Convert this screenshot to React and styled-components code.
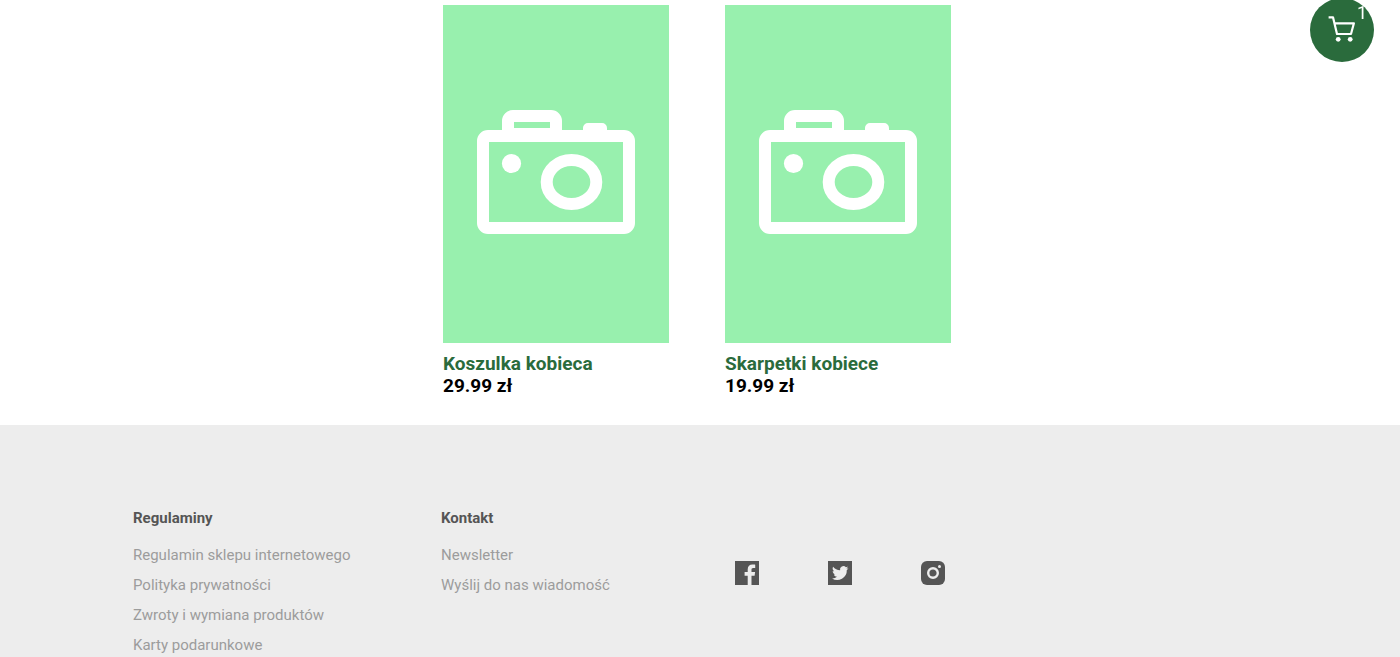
import React from 'react';
import styled, { createGlobalStyle } from 'styled-components';

const GlobalStyle = createGlobalStyle`
  *, *::before, *::after { box-sizing: border-box; }
  body {
    margin: 0;
    background: #fff;
    color: #000;
    font-family: Roboto, "Liberation Sans", sans-serif;
  }
  a { color: inherit; text-decoration: none; }
`;

const Page = styled.div`
  display: flex;
  flex-direction: column;
  min-height: 100vh;
`;

const Products = styled.main`
  display: flex;
  justify-content: center;
  gap: 56px;
  padding: 5px 24px 28px 18px;
`;

const Card = styled.a`
  display: block;
  width: 226px;
`;

const Photo = styled.svg`
  display: block;
  width: 100%;
  height: auto;
  background: #98f0ae;
`;

const Name = styled.h2`
  margin: 10px 0 0;
  color: #2a6b3c;
  font-size: 19px;
  line-height: 22px;
  font-weight: 700;
`;

const Price = styled.p`
  margin: 0;
  font-size: 19px;
  line-height: 22px;
  font-weight: 700;
`;

const CartButton = styled.button`
  position: fixed;
  top: -2px;
  right: 26px;
  width: 64px;
  height: 64px;
  padding: 0;
  border: 0;
  border-radius: 50%;
  background: #2a6b3c;
  color: #fff;
  font-family: inherit;
  cursor: pointer;

  svg { display: block; }
`;

const CartCount = styled.span`
  position: absolute;
  top: 4px;
  right: 7px;
  font-size: 18px;
  line-height: 22px;
`;

const Footer = styled.footer`
  flex: 1;
  display: grid;
  grid-template-columns: 308px 294px 210px;
  align-items: start;
  padding: 82px 9.5% 0;
  background: #ededed;
`;

const FooterTitle = styled.h3`
  margin: 0 0 11px;
  color: #555;
  font-size: 15px;
  line-height: 22px;
  font-weight: 700;
`;

const LinkList = styled.ul`
  margin: 0;
  padding: 0;
  list-style: none;
  color: #9c9c9c;
  font-size: 15px;
  line-height: 30px;
`;

const Social = styled.nav`
  display: flex;
  justify-content: space-between;
  padding-top: 54px;
  color: #555;

  svg { display: block; }
`;

function Camera() {
  return (
    <Photo viewBox="0 0 226 338" role="img" aria-label="Brak zdjęcia">
      <path
        fill="#fff"
        fillRule="evenodd"
        d="M45 125h14v-9a11 11 0 0 1 11-11h38a11 11 0 0 1 11 11v9h21v-2a5 5 0 0 1 5-5h14a5 5 0 0 1 5 5v2h17a11 11 0 0 1 11 11v82a11 11 0 0 1-11 11H45a11 11 0 0 1-11-11v-82a11 11 0 0 1 11-11zM46 137v80h134v-80zM71 117v6h36v-6z"
      />
      <circle cx="68.5" cy="158.5" r="9.6" fill="#fff" />
      <ellipse cx="128.5" cy="177" rx="24.8" ry="22" fill="none" stroke="#fff" strokeWidth="12" />
    </Photo>
  );
}

function Product({ name, price }) {
  return (
    <Card href="#">
      <Camera />
      <Name>{name}</Name>
      <Price>{price}</Price>
    </Card>
  );
}

function CartIcon() {
  return (
    <svg width="64" height="64" viewBox="0 0 64 64" aria-hidden="true">
      <path
        d="M18.600 19.300h4.400l4 16.700h14l2.900-10.700H24.600"
        fill="none"
        stroke="currentColor"
        strokeWidth="2.2"
        strokeLinejoin="round"
      />
      <circle cx="28.2" cy="41.3" r="2.4" fill="currentColor" />
      <circle cx="40.2" cy="41.3" r="2.4" fill="currentColor" />
    </svg>
  );
}

function Links({ title, items }) {
  return (
    <section>
      <FooterTitle>{title}</FooterTitle>
      <LinkList>
        {items.map((item) => (
          <li key={item}><a href="#">{item}</a></li>
        ))}
      </LinkList>
    </section>
  );
}

export default function App() {
  return (
    <Page>
      <GlobalStyle />
      <Products>
        <Product name="Koszulka kobieca" price="29.99 zł" />
        <Product name="Skarpetki kobiece" price="19.99 zł" />
      </Products>
      <CartButton aria-label="Koszyk">
        <CartIcon />
        <CartCount>1</CartCount>
      </CartButton>
      <Footer>
        <Links
          title="Regulaminy"
          items={['Regulamin sklepu internetowego', 'Polityka prywatności', 'Zwroty i wymiana produktów', 'Karty podarunkowe']}
        />
        <Links title="Kontakt" items={['Newsletter', 'Wyślij do nas wiadomość']} />
        <Social>
          <a href="#" aria-label="Facebook">
            <svg width="24" height="24" viewBox="0 0 24 24" fill="currentColor">
              <path d="M0 0h24v24h-7.500v-9.200h3.100l.5-3.700h-3.600V8.800c0-1.100.3-1.800 1.800-1.800h1.900V3.700c-.3 0-1.500-.1-2.800-.1-2.800 0-4.700 1.700-4.700 4.800v2.700H9.600v3.700h3.100V24H0z" />
            </svg>
          </a>
          <a href="#" aria-label="Twitter">
            <svg width="24" height="24" viewBox="0 0 24 24" fill="currentColor">
              <path fillRule="evenodd" d="M0 0h24v24H0zM18.500 7.300c.7-.4 1.200-1.100 1.500-1.900-.7.4-1.400.7-2.100.8a3.400 3.400 0 0 0-5.800 3.100c-2.800-.1-5.300-1.500-7-3.500-.9 1.500-.5 3.500 1.100 4.500-.6 0-1.100-.2-1.500-.4 0 1.600 1.100 3.100 2.700 3.400-.5.1-1 .2-1.500.1.4 1.300 1.700 2.300 3.100 2.300A6.800 6.800 0 0 1 4 17.400 9.600 9.600 0 0 0 18.800 9c.7-.5 1.200-1.100 1.700-1.800-.6.3-1.300.5-2 .1z" />
            </svg>
          </a>
          <a href="#" aria-label="Instagram">
            <svg width="24" height="24" viewBox="0 0 24 24">
              <rect width="24" height="24" rx="6" fill="currentColor" />
              <circle cx="12" cy="12" r="4.8" fill="none" stroke="#ededed" strokeWidth="2.4" />
              <circle cx="18.5" cy="5.6" r="1.5" fill="#ededed" />
            </svg>
          </a>
        </Social>
      </Footer>
    </Page>
  );
}
